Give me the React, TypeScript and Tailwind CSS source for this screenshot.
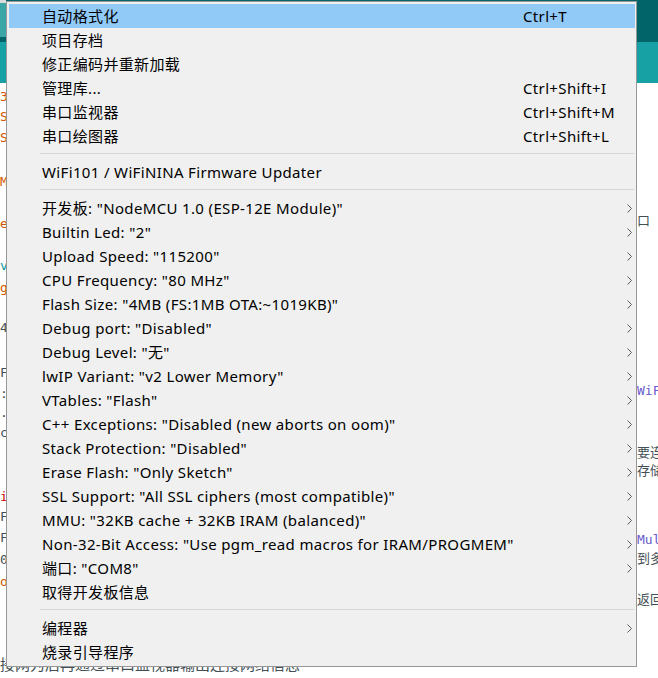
import React from 'react';

type Item =
  | { kind: 'item'; label: string; shortcut?: string; sub?: boolean; active?: boolean }
  | { kind: 'sep' };

const menu: Item[] = [
  { kind: 'item', label: '自动格式化', shortcut: 'Ctrl+T', active: true },
  { kind: 'item', label: '项目存档' },
  { kind: 'item', label: '修正编码并重新加载' },
  { kind: 'item', label: '管理库...', shortcut: 'Ctrl+Shift+I' },
  { kind: 'item', label: '串口监视器', shortcut: 'Ctrl+Shift+M' },
  { kind: 'item', label: '串口绘图器', shortcut: 'Ctrl+Shift+L' },
  { kind: 'sep' },
  { kind: 'item', label: 'WiFi101 / WiFiNINA Firmware Updater' },
  { kind: 'sep' },
  { kind: 'item', label: '开发板: "NodeMCU 1.0 (ESP-12E Module)"', sub: true },
  { kind: 'item', label: 'Builtin Led: "2"', sub: true },
  { kind: 'item', label: 'Upload Speed: "115200"', sub: true },
  { kind: 'item', label: 'CPU Frequency: "80 MHz"', sub: true },
  { kind: 'item', label: 'Flash Size: "4MB (FS:1MB OTA:~1019KB)"', sub: true },
  { kind: 'item', label: 'Debug port: "Disabled"', sub: true },
  { kind: 'item', label: 'Debug Level: "无"', sub: true },
  { kind: 'item', label: 'lwIP Variant: "v2 Lower Memory"', sub: true },
  { kind: 'item', label: 'VTables: "Flash"', sub: true },
  { kind: 'item', label: 'C++ Exceptions: "Disabled (new aborts on oom)"', sub: true },
  { kind: 'item', label: 'Stack Protection: "Disabled"', sub: true },
  { kind: 'item', label: 'Erase Flash: "Only Sketch"', sub: true },
  { kind: 'item', label: 'SSL Support: "All SSL ciphers (most compatible)"', sub: true },
  { kind: 'item', label: 'MMU: "32KB cache + 32KB IRAM (balanced)"', sub: true },
  { kind: 'item', label: 'Non-32-Bit Access: "Use pgm_read macros for IRAM/PROGMEM"', sub: true },
  { kind: 'item', label: '端口: "COM8"', sub: true },
  { kind: 'item', label: '取得开发板信息' },
  { kind: 'sep' },
  { kind: 'item', label: '编程器', sub: true },
  { kind: 'item', label: '烧录引导程序' },
];

// code fragments peeking out beside the menu (y = text centre)
const leftBits = [
  { y: 97, t: '3', c: 'text-[#d35400]' },
  { y: 117, t: 'S', c: 'text-[#d35400]' },
  { y: 138, t: 'S', c: 'text-[#d35400]' },
  { y: 182, t: 'M', c: 'text-[#d35400]' },
  { y: 224, t: 'e', c: 'text-[#d35400]' },
  { y: 266, t: 'v', c: 'text-[#00979c]' },
  { y: 288, t: 'g', c: 'text-[#d35400]' },
  { y: 328, t: '4', c: 'text-[#434f54]' },
  { y: 373, t: 'F', c: 'text-[#434f54]' },
  { y: 394, t: ':', c: 'text-[#434f54]' },
  { y: 413, t: '.', c: 'text-[#434f54]' },
  { y: 433, t: 'c', c: 'text-[#434f54]' },
  { y: 497, t: 'i', c: 'text-[#cc0000]' },
  { y: 517, t: 'F', c: 'text-[#434f54]' },
  { y: 538, t: 'F', c: 'text-[#434f54]' },
  { y: 560, t: '0', c: 'text-[#434f54]' },
  { y: 582, t: 'o', c: 'text-[#d35400]' },
];

const rightBits = [
  { y: 221, t: '口（', c: 'text-[#434f54]' },
  { y: 391, t: 'WiFi', c: 'text-[#6a5acd]' },
  { y: 453, t: '要连接', c: 'text-[#434f54]' },
  { y: 471, t: '存储数', c: 'text-[#434f54]' },
  { y: 540, t: 'Mult', c: 'text-[#6a5acd]' },
  { y: 559, t: '到多个', c: 'text-[#434f54]' },
  { y: 600, t: '返回', c: 'text-[#434f54]' },
];

const Bits = ({ bits }: { bits: { y: number; t: string; c: string }[] }) => {
  let cursor = 83;
  return (
    <div className="flex flex-col">
      {bits.map((b, i) => {
        const top = b.y - 9 - cursor;
        cursor = b.y + 9;
        return (
          <div
            key={i}
            style={{ marginTop: top }}
            className={`h-[18px] leading-[18px] whitespace-nowrap text-[13px] font-['DejaVu_Sans_Mono','Noto_Sans_CJK_SC',monospace] ${b.c}`}
          >
            {b.t}
          </div>
        );
      })}
    </div>
  );
};

const Chevron = () => (
  <svg width="5" height="9" viewBox="0 0 5 9" className="ml-auto mr-[3px]">
    <path d="M0.5 0.5 L4.5 4.5 L0.5 8.5" fill="none" stroke="#5a5a5a" strokeWidth="1" />
  </svg>
);

export default function App() {
  return (
    <div className="relative w-[658px] h-[678px] overflow-hidden bg-white font-['Noto_Sans','Noto_Sans_CJK_SC',sans-serif]">
      {/* IDE header bands */}
      <div className="flex h-[83px]">
        <div className="w-[6px] flex flex-col">
          <div className="h-[3px] bg-[#dcdcdc]" />
          <div className="h-[34px] bg-[#3aa6a6]" />
          <div className="h-[5px] bg-[#006468]" />
          <div className="flex-1 bg-[#17a1a5]" />
        </div>
        <div className="flex-1 flex flex-col">
          <div className="h-[42px] bg-[#006468]" />
          <div className="flex-1 bg-[#17a1a5]" />
        </div>
      </div>

      {/* editor text behind the menu */}
      <div className="flex h-[571px]">
        <div className="w-[12px] overflow-hidden">
          <Bits bits={leftBits} />
        </div>
        <div className="flex-1" />
        <div className="w-[21px] overflow-hidden">
          <Bits bits={rightBits} />
        </div>
      </div>
      <div className="h-[20px] text-[15px] leading-[20px] text-[#434f54] whitespace-nowrap font-['Noto_Sans_CJK_SC',sans-serif]">
        接网为后再通过串口监视器输出连接网络信息
      </div>

      {/* Tools menu */}
      <div className="absolute left-[6px] top-[1px] w-[631px] border border-[#979797] bg-[#f0f0f0] pl-[2px] pr-[1px] py-[2px] text-[15px] tracking-[0.35px] text-black">
        {menu.map((m, i) =>
          m.kind === 'sep' ? (
            <div key={i} className="h-[12px] pt-[5px] pl-[31px] pr-[1px]">
              <div className="h-px bg-[#d5d5d5]" />
            </div>
          ) : (
            <div
              key={i}
              className={`h-[24px] flex items-center pl-[33px] whitespace-nowrap ${m.active ? 'bg-[#91c9f7]' : ''}`}
            >
              <span className="w-[481px] shrink-0">{m.label}</span>
              {m.shortcut && <span>{m.shortcut}</span>}
              {m.sub && <Chevron />}
            </div>
          )
        )}
      </div>
    </div>
  );
}
